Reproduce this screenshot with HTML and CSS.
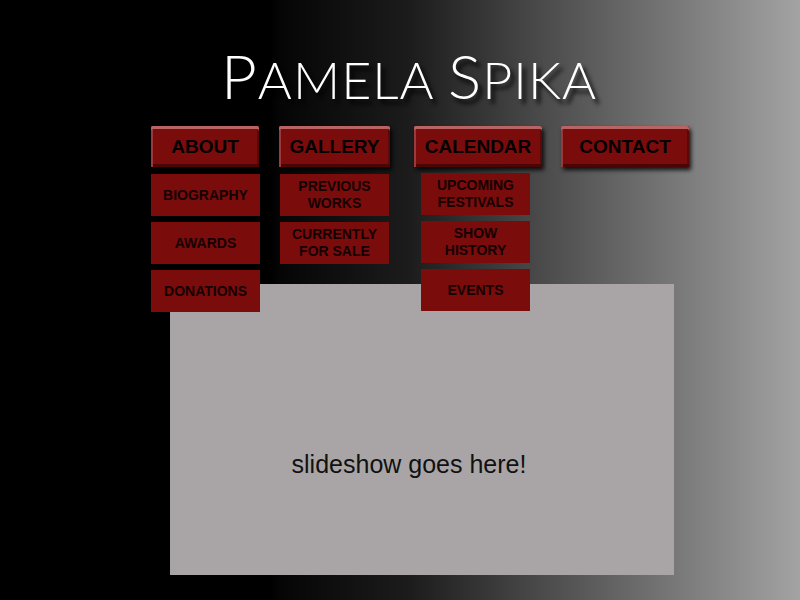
FILE: index.html
```html
<!DOCTYPE html>
<html lang="en">
<head>
    <meta charset="UTF-8">
    <meta name="viewport" content="width=device-width, initial-scale=1.0">
    <title>Pamela Spika</title>
    <link rel="stylesheet" href="styles.css">
</head>
<body>

    <h1 class="site-title"><span class="big">P</span>AMELA <span class="big">S</span>PIKA</h1>

    <nav class="menu">
        <div class="menu-col col-about">
            <a class="main-btn" href="#">ABOUT</a>
            <ul class="sub-menu">
                <li><a class="sub-btn" href="#">BIOGRAPHY</a></li>
                <li><a class="sub-btn" href="#">AWARDS</a></li>
                <li><a class="sub-btn" href="#">DONATIONS</a></li>
            </ul>
        </div>
        <div class="menu-col col-gallery">
            <a class="main-btn" href="#">GALLERY</a>
            <ul class="sub-menu">
                <li><a class="sub-btn" href="#">PREVIOUS<br>WORKS</a></li>
                <li><a class="sub-btn" href="#">CURRENTLY<br>FOR SALE</a></li>
            </ul>
        </div>
        <div class="menu-col col-calendar">
            <a class="main-btn" href="#">CALENDAR</a>
            <ul class="sub-menu">
                <li><a class="sub-btn" href="#">UPCOMING<br>FESTIVALS</a></li>
                <li><a class="sub-btn" href="#">SHOW<br>HISTORY</a></li>
                <li><a class="sub-btn" href="#">EVENTS</a></li>
            </ul>
        </div>
        <div class="menu-col col-contact">
            <a class="main-btn" href="#">CONTACT</a>
        </div>
    </nav>

    <div class="slideshow">
        <p>slideshow goes here!</p>
    </div>

</body>
</html>
```

FILE: styles.css
```css
body {
    margin: 0;
    height: 600px;
    overflow: hidden;
    font-family: 'Liberation Sans', Arial, sans-serif;
    background: linear-gradient(to right,
        #000000 0px,
        #000000 270px,
        #050505 280px,
        #1c1c1c 410px,
        #4a4a4a 540px,
        #767676 670px,
        #a3a3a3 800px);
}

.site-title {
    margin: 0;
    padding: 44px 0 0 221px;
    height: 82px;
    box-sizing: border-box;
    font-family: 'Lato', sans-serif;
    font-weight: 300;
    font-size: 52px;
    line-height: 1;
    letter-spacing: 1px;
    color: #ffffff;
    text-shadow: 4px 5px 4px rgba(0, 0, 0, 0.9);
}

.site-title .big {
    font-size: 62px;
}

.menu {
    display: flex;
    padding-left: 151px;
    margin-top: 44px;
    height: 41px;
}

.menu-col {
    position: relative;
}

.col-about { width: 108px; }
.col-gallery { width: 111px; margin-left: 20px; }
.col-calendar { width: 128px; margin-left: 24px; }
.col-contact { width: 128px; margin-left: 19px; }

.main-btn {
    display: flex;
    justify-content: center;
    align-items: center;
    height: 41px;
    padding-top: 1px;
    box-sizing: border-box;
    border-radius: 2px 2px 0 0;
    background-color: #7a0c0c;
    color: #050000;
    font-weight: bold;
    font-size: 19px;
    text-decoration: none;
    box-shadow:
        inset 0 3px 0 #b86464,
        inset 2px 0 0 #9a3a3a,
        inset 0 -3px 0 #4c0505,
        inset -2px 0 0 #5a0808,
        2px 3px 4px rgba(0, 0, 0, 0.85);
}

.sub-menu {
    position: absolute;
    top: 48px;
    left: 0;
    margin: 0;
    padding: 0;
    list-style: none;
    display: flex;
    flex-direction: column;
    gap: 6px;
    z-index: 2;
}

.col-gallery .sub-menu { left: 1px; }
.col-calendar .sub-menu { left: 7px; top: 47px; }

.sub-btn {
    display: flex;
    justify-content: center;
    align-items: center;
    width: 109px;
    height: 42px;
    background-color: #7b0c0c;
    color: #140101;
    font-weight: bold;
    font-size: 14px;
    line-height: 17px;
    text-align: center;
    text-decoration: none;
}

.slideshow {
    display: flex;
    justify-content: center;
    align-items: center;
    width: 504px;
    height: 291px;
    padding-right: 26px;
    box-sizing: border-box;
    margin: 117px 0 0 170px;
    background-color: #a9a5a6;
}

.slideshow p {
    margin: 70px 0 0 0;
    font-size: 25px;
    color: #111111;
}
```
